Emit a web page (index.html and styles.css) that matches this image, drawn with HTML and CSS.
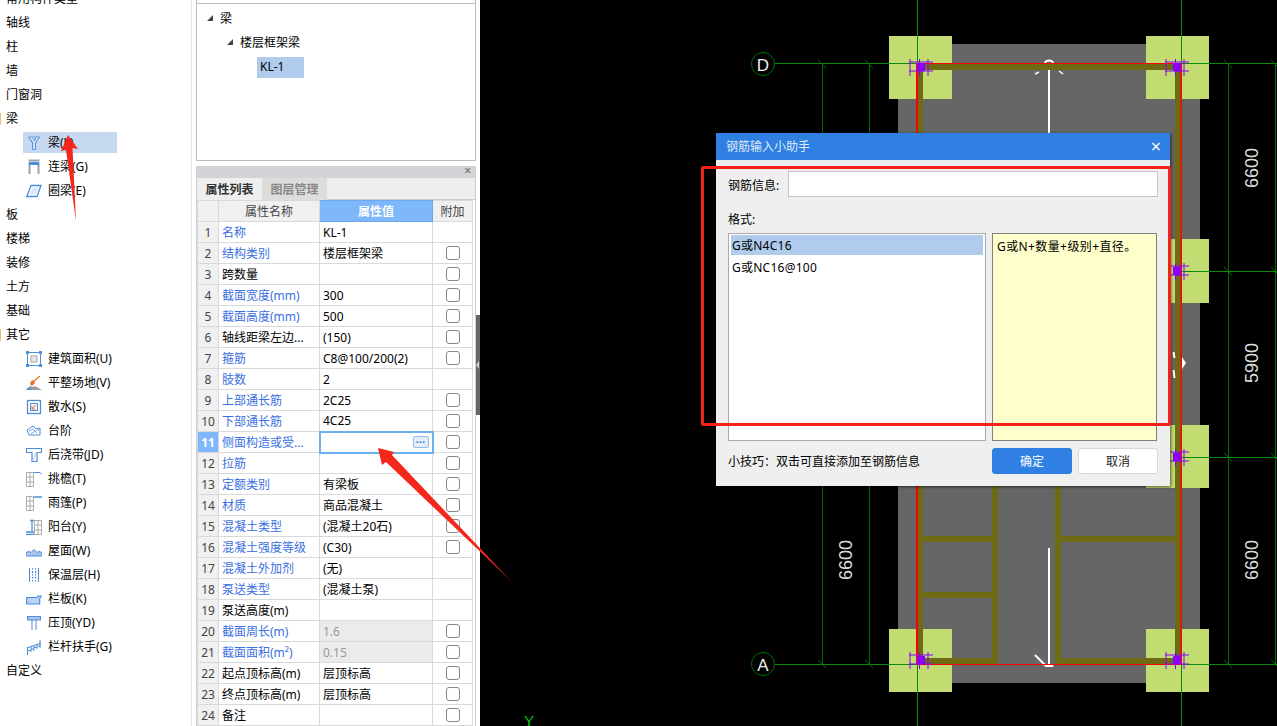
FILE: index.html
```html
<!DOCTYPE html>
<html lang="zh-CN">
<head>
    <meta charset="UTF-8">
    <title>钢筋输入小助手</title>
    <link rel="stylesheet" href="styles.css">
</head>
<body>

<div class="app">
    <!-- Component tree -->
    <aside class="sidebar">
        <div class="group">常用构件类型</div>
        <div class="group">轴线</div>
        <div class="group">柱</div>
        <div class="group">墙</div>
        <div class="group">门窗洞</div>
        <div class="group marked">梁</div>
        <ul class="sub-list">
            <li class="sub-item selected">
                <svg class="icon" viewBox="0 0 16 16"><path d="M2.500 2h11L9.500 8v6.500h-3V8z" fill="#cfe0f5" stroke="#5b93da"/><path d="M4 4l3 4M7 3l2 3M10 3L8 6" stroke="#5b93da" fill="none"/></svg>
                <span>梁(L)</span>
            </li>
            <li class="sub-item">
                <svg class="icon" viewBox="0 0 16 16"><path d="M3.500 15V3.500M12.500 15V3.500" stroke="#9aa3ad" stroke-width="2" fill="none"/><path d="M2.500 1.500h11" stroke="#9aa3ad" stroke-width="2"/><path d="M3 4.500h10" stroke="#4c8ddc" stroke-width="3"/></svg>
                <span>连梁(G)</span>
            </li>
            <li class="sub-item">
                <svg class="icon" viewBox="0 0 16 16"><path d="M5 2.500h10L11 13.500H.8z" fill="#fff" stroke="#4c8ddc" stroke-width="1.300"/><path d="M6.500 4.500h6l-2.500 7H3.500z" fill="#dbe7f6"/></svg>
                <span>圈梁(E)</span>
            </li>
        </ul>
        <div class="group">板</div>
        <div class="group">楼梯</div>
        <div class="group">装修</div>
        <div class="group">土方</div>
        <div class="group">基础</div>
        <div class="group marked">其它</div>
        <ul class="sub-list">
            <li class="sub-item">
                <svg class="icon" viewBox="0 0 16 16"><rect x="1.500" y="1.500" width="13" height="13" fill="#fff" stroke="#4c8ddc"/><rect x="5" y="5" width="6" height="6" fill="#e6e6e6" stroke="#a9a9a9"/><path d="M0 0h3v3H0zM13 0h3v3h-3zM0 13h3v3H0zM13 13h3v3h-3z" fill="#4c8ddc"/></svg>
                <span>建筑面积(U)</span>
            </li>
            <li class="sub-item">
                <svg class="icon" viewBox="0 0 16 16"><path d="M0 15l4-4 3 1 2-1 7 4z" fill="#9c9c9c"/><path d="M0 15l3-3 3 3z" fill="#4c8ddc"/><path d="M5 6l3-1 1 3-3 3-2-2z" fill="#e8742a"/><path d="M8 6l6-5" stroke="#e8742a" stroke-width="1.300"/></svg>
                <span>平整场地(V)</span>
            </li>
            <li class="sub-item">
                <svg class="icon" viewBox="0 0 16 16"><rect x="1.500" y="1.500" width="13" height="13" fill="#fff" stroke="#4c8ddc" stroke-width="1.300"/><rect x="4.500" y="4.500" width="7" height="7" fill="#f3f6fb" stroke="#4c8ddc"/><path d="M10 6L6.500 9.500M6 7v3h3" stroke="#e8742a" fill="none"/></svg>
                <span>散水(S)</span>
            </li>
            <li class="sub-item">
                <svg class="icon" viewBox="0 0 16 16"><path d="M1 7l6-4 3 3 4-1v7H3z" fill="#fff" stroke="#4c8ddc"/><path d="M3 8l4-2 4 4M5 11l4-3M10 7h4" stroke="#7fa9dd" fill="none"/></svg>
                <span>台阶</span>
            </li>
            <li class="sub-item">
                <svg class="icon" viewBox="0 0 16 16"><path d="M.500 1.500h15v4h-4.500v9H6v-9H.500z" fill="#fff" stroke="#4c8ddc" stroke-width="1.200"/><path d="M6.500 14l4-9" stroke="#a9c6ea"/></svg>
                <span>后浇带(JD)</span>
            </li>
            <li class="sub-item">
                <svg class="icon" viewBox="0 0 16 16"><path d="M.500 1.500h7v14h-7zM.500 6h7M.500 11h7M4 1.500v14" fill="#fff" stroke="#ababab"/><path d="M8 1.500h6l2 2" stroke="#4c8ddc" fill="none"/></svg>
                <span>挑檐(T)</span>
            </li>
            <li class="sub-item">
                <svg class="icon" viewBox="0 0 16 16"><path d="M.500 1.500h7v14h-7zM.500 6h7M.500 11h7M4 1.500v14" fill="#fff" stroke="#ababab"/><path d="M8 2h8" stroke="#4c8ddc" stroke-width="1.500"/></svg>
                <span>雨篷(P)</span>
            </li>
            <li class="sub-item">
                <svg class="icon" viewBox="0 0 16 16"><path d="M8.500 1.500h7v14h-7zM8.500 6h7M8.500 11h7M12 1.500v14" fill="#fff" stroke="#ababab"/><path d="M4 1.500h4M6 1.500V12M0 13h8M0 15.500h8" stroke="#4c8ddc" stroke-width="1.300" fill="none"/></svg>
                <span>阳台(Y)</span>
            </li>
            <li class="sub-item">
                <svg class="icon" viewBox="0 0 16 16"><path d="M0 13V9.500l3-1 2 1 3-3 3 3 2-1 3 1V13z" fill="#a9c6ea" stroke="#4c8ddc"/></svg>
                <span>屋面(W)</span>
            </li>
            <li class="sub-item">
                <svg class="icon" viewBox="0 0 16 16"><path d="M3.500 1v14M12.500 1v14" stroke="#4c8ddc"/><path d="M6.500 1v14M9.500 1v14M3 5.500h10M3 10.500h10" stroke="#4c8ddc" stroke-dasharray="1.500 1.500"/></svg>
                <span>保温层(H)</span>
            </li>
            <li class="sub-item">
                <svg class="icon" viewBox="0 0 16 16"><path d="M.700 6.500h10l1 -1.500h3.500l-1.500 2.500v5.500H.700z" fill="#bcd4f0" stroke="#4c8ddc" stroke-width="1.200"/></svg>
                <span>栏板(K)</span>
            </li>
            <li class="sub-item">
                <svg class="icon" viewBox="0 0 16 16"><rect x="1.500" y="1.500" width="13" height="3.500" fill="#a9c6ea" stroke="#4c8ddc"/><path d="M6 5v10M10 5v10" stroke="#4c8ddc"/></svg>
                <span>压顶(YD)</span>
            </li>
            <li class="sub-item">
                <svg class="icon" viewBox="0 0 16 16"><path d="M1 9l14-5M1.500 8v8M5 7v6M8 6v6M11 5V10M14 1V9M1 11.500h4M5 10h3M8 8.500h3M11 7h4" stroke="#4c8ddc" fill="none"/></svg>
                <span>栏杆扶手(G)</span>
            </li>
        </ul>
        <div class="group">自定义</div>
    </aside>

    <!-- Definition panel -->
    <section class="panel">
        <div class="tree">
            <div class="tree-row"><i class="caret"></i>梁</div>
            <div class="tree-row level-2"><i class="caret"></i>楼层框架梁</div>
            <div class="tree-leaf">KL-1</div>
        </div>

        <div class="props">
            <div class="props-bar"><span class="props-close">×</span></div>
            <div class="tabs">
                <div class="tab active">属性列表</div>
                <div class="tab">图层管理</div>
            </div>
            <table class="prop-table">
                <colgroup>
                    <col class="col-num"><col class="col-name"><col class="col-value"><col class="col-add">
                </colgroup>
                <thead>
                    <tr><th></th><th>属性名称</th><th class="head-value">属性值</th><th>附加</th></tr>
                </thead>
                <tbody>
                    <tr><td class="num">1</td><td class="link">名称</td><td>KL-1</td><td></td></tr>
                    <tr><td class="num">2</td><td class="link">结构类别</td><td>楼层框架梁</td><td><span class="check"></span></td></tr>
                    <tr><td class="num">3</td><td>跨数量</td><td></td><td><span class="check"></span></td></tr>
                    <tr><td class="num">4</td><td class="link">截面宽度(mm)</td><td>300</td><td><span class="check"></span></td></tr>
                    <tr><td class="num">5</td><td class="link">截面高度(mm)</td><td>500</td><td><span class="check"></span></td></tr>
                    <tr><td class="num">6</td><td>轴线距梁左边...</td><td>(150)</td><td><span class="check"></span></td></tr>
                    <tr><td class="num">7</td><td class="link">箍筋</td><td>C8@100/200(2)</td><td><span class="check"></span></td></tr>
                    <tr><td class="num">8</td><td class="link">肢数</td><td>2</td><td></td></tr>
                    <tr><td class="num">9</td><td class="link">上部通长筋</td><td>2C25</td><td><span class="check"></span></td></tr>
                    <tr><td class="num">10</td><td class="link">下部通长筋</td><td>4C25</td><td><span class="check"></span></td></tr>
                    <tr><td class="num current">11</td><td class="link">侧面构造或受...</td><td class="editing"><span class="more">···</span></td><td><span class="check"></span></td></tr>
                    <tr><td class="num">12</td><td class="link">拉筋</td><td></td><td><span class="check"></span></td></tr>
                    <tr><td class="num">13</td><td class="link">定额类别</td><td>有梁板</td><td><span class="check"></span></td></tr>
                    <tr><td class="num">14</td><td class="link">材质</td><td>商品混凝土</td><td><span class="check"></span></td></tr>
                    <tr><td class="num">15</td><td class="link">混凝土类型</td><td>(混凝土20石)</td><td><span class="check"></span></td></tr>
                    <tr><td class="num">16</td><td class="link">混凝土强度等级</td><td>(C30)</td><td><span class="check"></span></td></tr>
                    <tr><td class="num">17</td><td class="link">混凝土外加剂</td><td>(无)</td><td></td></tr>
                    <tr><td class="num">18</td><td class="link">泵送类型</td><td>(混凝土泵)</td><td></td></tr>
                    <tr><td class="num">19</td><td>泵送高度(m)</td><td></td><td></td></tr>
                    <tr><td class="num">20</td><td class="link">截面周长(m)</td><td class="readonly">1.6</td><td><span class="check"></span></td></tr>
                    <tr><td class="num">21</td><td class="link">截面面积(m²)</td><td class="readonly">0.15</td><td><span class="check"></span></td></tr>
                    <tr><td class="num">22</td><td>起点顶标高(m)</td><td>层顶标高</td><td><span class="check"></span></td></tr>
                    <tr><td class="num">23</td><td>终点顶标高(m)</td><td>层顶标高</td><td><span class="check"></span></td></tr>
                    <tr><td class="num">24</td><td>备注</td><td></td><td><span class="check"></span></td></tr>
                </tbody>
            </table>
        </div>
        <div class="splitter"></div>
    </section>

    <!-- Drawing canvas, numbers below are page coordinates -->
    <main class="canvas">
        <svg class="drawing" viewBox="480 0 797 726" width="797" height="726">
            <defs>
                <g id="pin">
                    <rect x="0" y="0" width="8" height="8" fill="#8a00ff"/>
                    <path d="M-7 -4V13M2.500 -4V13M11 -4V13M-8 -1H16M-8 8H16" stroke="#8a00ff" fill="none"/>
                </g>
            </defs>

            <rect x="898" y="44" width="302" height="639" fill="#666"/>
            <g fill="#c3dc72">
                <rect x="889" y="36" width="63" height="63"/>
                <rect x="1146" y="36" width="63" height="63"/>
                <rect x="1146" y="239" width="63" height="64"/>
                <rect x="1146" y="425" width="63" height="63"/>
                <rect x="889" y="629" width="63" height="63"/>
                <rect x="1146" y="629" width="63" height="63"/>
            </g>

            <!-- beams -->
            <g fill="#6e6b14">
                <rect x="917" y="64" width="264" height="6"/>
                <rect x="917" y="64" width="6" height="600"/>
                <rect x="1175" y="64" width="6" height="600"/>
                <rect x="917" y="658" width="81" height="6"/>
                <rect x="1055" y="658" width="126" height="6"/>
                <rect x="992" y="480" width="6" height="184"/>
                <rect x="1055" y="480" width="6" height="184"/>
                <rect x="923" y="536" width="70" height="6"/>
                <rect x="923" y="592" width="70" height="6"/>
                <rect x="1061" y="536" width="114" height="6"/>
            </g>

            <!-- up and down arrows -->
            <g stroke="#fff" fill="none">
                <path d="M1049 70V134" stroke-width="2"/>
                <path d="M1035 74l4 -2M1059 71l4 3" stroke-width="1.500"/>
                <path d="M1045 63.500a4 3 0 0 1 8 0" stroke-width="2"/>
                <path d="M1049 548V666" stroke-width="2"/>
                <path d="M1035 655l11 11h6l1 -1" stroke-width="2"/>
                <path d="M1173.500 352l1 6M1173.500 370l1 8" stroke-width="2"/>
            </g>
            <path d="M1182 357l4 6 -4 6z" fill="#fff"/>

            <!-- axis and dimension lines -->
            <g stroke="#006f00" fill="none" shape-rendering="crispEdges">
                <path d="M822.500 64V664M869.500 64V664M1228.500 64V664M1275.500 64V664"/>
            </g>
            <g stroke="#0a8a0a" fill="none" shape-rendering="crispEdges">
                <path d="M917.500 0V726M1181.500 0V726"/>
                <path d="M775 63.500H1277M775 664.500H1277M1181 271.500H1277M1181 457.500H1277"/>
            </g>
            <g stroke="#006f00" fill="none">
                <path d="M818 60l8 8M865 60l8 8M1224 60l8 8M1271 60l8 8"/>
                <path d="M818 660l8 8M865 660l8 8M1224 660l8 8M1271 660l8 8"/>
                <path d="M1224 267l8 8M1271 267l8 8M1224 453l8 8M1271 453l8 8"/>
            </g>
            <g fill="#f00">
                <rect x="916" y="63" width="2" height="602"/>
                <rect x="1180.500" y="63" width="1.500" height="602"/>
                <rect x="916" y="63" width="266" height="1"/>
                <rect x="916" y="664" width="266" height="1"/>
            </g>

            <use href="#pin" x="917" y="63"/>
            <use href="#pin" x="1173" y="63"/>
            <use href="#pin" x="1173" y="267"/>
            <use href="#pin" x="1173" y="453"/>
            <use href="#pin" x="917" y="656"/>
            <use href="#pin" x="1173" y="656"/>

            <!-- axis bubbles -->
            <circle cx="763" cy="64" r="11.500" fill="none" stroke="#006f00"/>
            <circle cx="763" cy="664" r="11.500" fill="none" stroke="#006f00"/>
            <text class="axis-label" x="763" y="70.500">D</text>
            <text class="axis-label" x="763" y="670.500">A</text>

            <!-- dimension texts -->
            <text class="dim" transform="translate(1258 168) rotate(-90)">6600</text>
            <text class="dim" transform="translate(1258 363) rotate(-90)">5900</text>
            <text class="dim" transform="translate(1258 560) rotate(-90)">6600</text>
            <text class="dim" transform="translate(852 560) rotate(-90)">6600</text>

            <text class="ucs" x="529" y="726">Y</text>
        </svg>

        <!-- Rebar input helper dialog -->
        <div class="dialog">
            <div class="dialog-title">
                <span>钢筋输入小助手</span>
                <span class="dialog-close">×</span>
            </div>
            <div class="dialog-body">
                <div class="field">
                    <label class="field-label">钢筋信息:</label>
                    <div class="field-input"></div>
                </div>
                <div class="format-label">格式:</div>
                <div class="format-row">
                    <ul class="format-list">
                        <li class="selected">G或N4C16</li>
                        <li>G或NC16@100</li>
                    </ul>
                    <div class="format-hint">G或N+数量+级别+直径。</div>
                </div>
                <div class="dialog-foot">
                    <span class="tip">小技巧：双击可直接添加至钢筋信息</span>
                    <button type="button" class="btn primary">确定</button>
                    <button type="button" class="btn">取消</button>
                </div>
            </div>
        </div>
    </main>
</div>

<!-- Red annotations drawn on the screenshot -->
<div class="note-box"></div>
<svg class="note-arrows" viewBox="0 0 1277 726" width="1277" height="726">
    <path d="M68 135L78 149 72.500 148 76 221 66 150 61 151z" fill="#f4271b"/>
    <path d="M378 448L394 452 392 455 512 582 386 462 382 465z" fill="#f4271b"/>
</svg>

</body>
</html>
```

FILE: styles.css
```css
* {
    margin: 0;
    padding: 0;
    box-sizing: border-box;
}

html, body {
    width: 1277px;
    height: 726px;
    overflow: hidden;
}

body {
    position: relative;
    background-color: #fff;
    color: #000;
    font-family: "Noto Sans", "Noto Sans CJK SC", sans-serif;
    font-size: 12px;
}

.app {
    display: flex;
    height: 726px;
}

/* Sidebar */
.sidebar {
    width: 192px;
    flex: none;
    margin-top: -14px;
    border-right: 1px solid #e3e3e3;
}

.group {
    position: relative;
    height: 24px;
    line-height: 26px;
    padding-left: 6px;
}

.group.marked::before {
    content: "";
    position: absolute;
    left: 0;
    top: 7px;
    width: 1px;
    height: 12px;
    background-color: #f3c06a;
}

.sub-list {
    list-style: none;
    display: flex;
    flex-direction: column;
    gap: 3px;
    padding: 2px 0 1px 23px;
}

.sub-item {
    display: flex;
    align-items: center;
    gap: 6px;
    width: 94px;
    height: 21px;
    padding-left: 3px;
    white-space: nowrap;
}

.sub-item span {
    margin-bottom: 2px;
}

.sub-item.selected {
    background-color: #c6d9f1;
}

.icon {
    width: 16px;
    height: 16px;
    flex: none;
}

/* Panel */
.panel {
    position: relative;
    width: 288px;
    flex: none;
    padding: 3px 4px 0 4px;
    overflow: hidden;
}

.tree {
    position: relative;
    height: 158px;
    border: 1px solid #bbb;
    padding-top: 2px;
    margin-bottom: 5px;
    background-color: #fff;
}

.tree::before {
    content: "";
    position: absolute;
    left: -1px;
    right: -1px;
    top: -4px;
    height: 3px;
    border-left: 1px solid #bbb;
    border-right: 1px solid #bbb;
}

.tree-row {
    display: flex;
    align-items: center;
    height: 24px;
    padding-left: 10px;
}

.tree-row.level-2 {
    padding-left: 30px;
}

.caret {
    width: 0;
    height: 0;
    margin-right: 7px;
    border-style: solid;
    border-width: 0 0 6px 6px;
    border-color: transparent transparent #444 transparent;
}

.tree-leaf {
    width: 47px;
    height: 21px;
    line-height: 19px;
    margin: 3px 0 0 60px;
    padding-left: 3px;
    background-color: #b0cbeb;
}

.props {
    border-left: 1px solid #ccc;
    border-right: 1px solid #ccc;
    background-color: #fff;
}

.props-bar {
    position: relative;
    height: 12px;
    background-color: #d3d4d8;
}

.props-close {
    position: absolute;
    right: 4px;
    top: -2px;
    line-height: 14px;
    font-size: 12px;
    color: #666;
}

.tabs {
    display: flex;
    height: 22px;
    background-color: #eee;
    border-bottom: 1px solid #ccc;
}

.tab {
    width: 65px;
    height: 22px;
    line-height: 24px;
    text-align: center;
    font-weight: bold;
    color: #888;
    background-color: #ddd;
}

.tab.active {
    color: #333;
    background-color: #eee;
}

.prop-table {
    width: 275px;
    table-layout: fixed;
    border-collapse: collapse;
}

.col-num { width: 21px; }
.col-name { width: 101px; }
.col-value { width: 113px; }
.col-add { width: 40px; }

.prop-table th,
.prop-table td {
    height: 21px;
    padding: 0 0 0 3px;
    border: 1px solid #d9d9d9;
    font-weight: normal;
    white-space: nowrap;
    overflow: hidden;
}

.prop-table th {
    text-align: center;
    padding: 0;
    color: #444;
    background-color: #f0f0f0;
}

.prop-table th.head-value {
    background-color: #7eb8fa;
    border: 1px solid #6aa8ee;
    color: #fff;
    font-weight: bold;
}

.prop-table td:last-child {
    text-align: center;
    padding: 0;
    line-height: 0;
}

.prop-table td.num {
    padding: 0;
    text-align: center;
    color: #444;
    background-color: #f0f0f0;
}

.prop-table td.num.current {
    background-color: #7eb8fa;
    color: #fff;
    font-weight: bold;
}

.prop-table td.link {
    color: #3a6fe2;
}

.prop-table td.readonly {
    background-color: #ebebeb;
    color: #999;
}

.prop-table td.editing {
    border: 2px solid #6fb0f0;
    text-align: right;
    padding: 0 3px 0 0;
    line-height: 0;
}

.more {
    display: inline-block;
    width: 16px;
    height: 12px;
    line-height: 10px;
    text-align: center;
    font-size: 11px;
    font-weight: bold;
    color: #4c7fb8;
    background-color: #e3eefa;
    border: 1px solid #8fbdec;
    border-radius: 2px;
}

.check {
    display: inline-block;
    width: 14px;
    height: 14px;
    border: 1px solid #888;
    border-radius: 3px;
    background-color: #fff;
}

.splitter {
    position: absolute;
    right: 0;
    top: 315px;
    width: 4px;
    height: 100px;
    background-color: #666;
}

.splitter::after {
    content: "";
    position: absolute;
    left: 0;
    top: 46px;
    border-style: solid;
    border-width: 4px 3px 4px 0;
    border-color: transparent #ccc transparent transparent;
}

/* Canvas */
.canvas {
    position: relative;
    flex: 1;
    background-color: #000;
    overflow: hidden;
}

.drawing {
    display: block;
}

.axis-label {
    font-family: "Liberation Sans", sans-serif;
    font-size: 17px;
    fill: #eee;
    text-anchor: middle;
}

.dim {
    font-family: "Liberation Sans", sans-serif;
    font-size: 18px;
    fill: #ddd;
    text-anchor: middle;
}

.ucs {
    font-family: "Liberation Sans", sans-serif;
    font-size: 15px;
    fill: #00c800;
    text-anchor: middle;
}

/* Dialog */
.dialog {
    position: absolute;
    left: 236px;
    top: 133px;
    width: 454px;
    height: 353px;
    background-color: #efefef;
    box-shadow: 1px 1px 3px rgba(0, 0, 0, 0.6);
}

.dialog-title {
    display: flex;
    justify-content: space-between;
    align-items: center;
    height: 27px;
    padding: 0 9px 2px 10px;
    background-color: #2f80e2;
    color: #dfe9f7;
}

.dialog-close {
    font-size: 18px;
    line-height: 18px;
    color: #fff;
}

.dialog-body {
    padding: 11px 12px 0;
}

.field {
    display: flex;
    align-items: center;
    height: 26px;
}

.field-label {
    width: 60px;
    flex: none;
    padding-top: 2px;
}

.field-input {
    flex: 1;
    height: 26px;
    background-color: #fff;
    border: 1px solid #c4c4c4;
}

.format-label {
    height: 18px;
    line-height: 20px;
    margin: 13px 0 5px;
}

.format-row {
    display: flex;
    gap: 6px;
    height: 208px;
}

.format-list {
    list-style: none;
    width: 258px;
    padding: 1px 2px;
    background-color: #fff;
    border: 1px solid #aaa;
}

.format-list li {
    height: 20px;
    line-height: 22px;
    padding-left: 1px;
    margin-bottom: 2px;
    letter-spacing: 0.25px;
}

.format-hint {
    width: 165px;
    padding: 3px 4px;
    line-height: 20px;
    letter-spacing: 0.4px;
    background-color: #ffc;
    border: 1px solid #808080;
}

.format-list li.selected {
    background-color: #b0cbeb;
}

.dialog-foot {
    display: flex;
    align-items: center;
    gap: 6px;
    height: 26px;
    margin-top: 7px;
}

.tip {
    flex: 1;
}

.btn {
    width: 80px;
    height: 26px;
    font: inherit;
    background-color: #fff;
    border: 1px solid #d8d8d8;
    border-radius: 3px;
    color: #222;
}

.btn.primary {
    background-color: #2f80e2;
    border-color: #2f80e2;
    color: #fff;
}

/* Annotations */
.note-box {
    position: absolute;
    left: 701px;
    top: 166px;
    width: 470px;
    height: 260px;
    border: 3px solid #f4201a;
    border-radius: 2px;
}

.note-arrows {
    position: absolute;
    left: 0;
    top: 0;
    pointer-events: none;
}
```
